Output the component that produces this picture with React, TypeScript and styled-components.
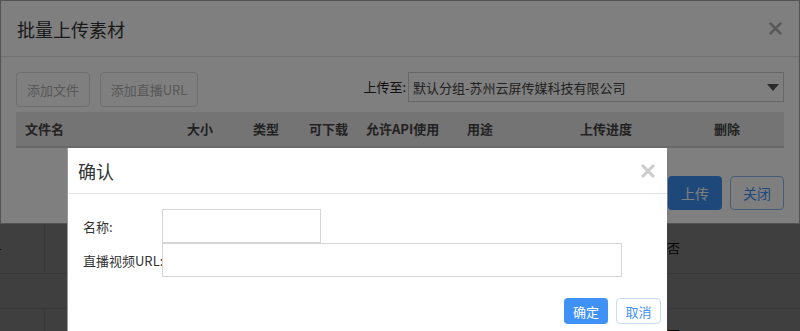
import styled, { createGlobalStyle } from "styled-components";

const GlobalStyle = createGlobalStyle`
  html, body {
    margin: 0;
    padding: 0;
    width: 800px;
    height: 331px;
    overflow: hidden;
    background: #fff;
    font-family: "Liberation Sans", "Noto Sans CJK SC", sans-serif;
    color: #333;
  }
  * { box-sizing: border-box; }
`;

const columns = [
  { label: "文件名", x: 25 },
  { label: "大小", x: 187 },
  { label: "类型", x: 253 },
  { label: "可下载", x: 309 },
  { label: "允许API使用", x: 366 },
  { label: "用途", x: 467 },
  { label: "上传进度", x: 580 },
  { label: "删除", x: 714 },
];

const CloseIcon = ({ size, color }: { size: number; color: string }) => (
  <svg width={size} height={size} viewBox="0 0 16 16">
    <path d="M2 2 L14 14 M14 2 L2 14" stroke={color} strokeWidth="3" />
  </svg>
);

const App = () => {
  return (
    <>
      <GlobalStyle />
      <Page>
        <PageRow $height={51}>
          <PageCell $width={45}>
            <Dash>-</Dash>
          </PageCell>
          <PageCell $width={620} />
          <PageCell $grow>否</PageCell>
        </PageRow>
        <PageRow $height={34}>
          <PageCell $grow />
        </PageRow>
        <PageRow $height={51}>
          <PageCell $width={45} />
          <PageCell $width={620} />
          <PageCell $grow>否</PageCell>
        </PageRow>
      </Page>

      <Mask />

      <UploadModal>
        <ModalHeader>
          <ModalTitle>批量上传素材</ModalTitle>
          <CloseIcon size={15} color="#b3b3b3" />
        </ModalHeader>
        <UploadBody>
          <Toolbar>
            <GhostButton $width={74}>添加文件</GhostButton>
            <GhostButton $width={98}>添加直播URL</GhostButton>
            <TargetLabel>上传至:</TargetLabel>
            <SelectBox>
              <span>默认分组-苏州云屏传媒科技有限公司</span>
              <Caret />
            </SelectBox>
          </Toolbar>
          <TableHead>
            {columns.map((c) => (
              <HeadCell key={c.label} style={{ left: c.x - 16 }}>
                {c.label}
              </HeadCell>
            ))}
          </TableHead>
        </UploadBody>
        <UploadFooter>
          <PrimaryButton $width={54} $height={34} $size={14}>
            上传
          </PrimaryButton>
          <OutlineButton $width={54} $height={34} $size={14} $border="#8fb9ef">
            关闭
          </OutlineButton>
        </UploadFooter>
      </UploadModal>

      <Mask />

      <ConfirmDialog>
        <DialogHeader>
          <ModalTitle>确认</ModalTitle>
          <CloseIcon size={16} color="#cccccc" />
        </DialogHeader>
        <DialogBody>
          <FormRow>
            <FieldLabel>名称:</FieldLabel>
            <TextInput $width={159} />
          </FormRow>
          <FormRow>
            <FieldLabel>直播视频URL:</FieldLabel>
            <TextInput $width={460} />
          </FormRow>
        </DialogBody>
        <DialogFooter>
          <PrimaryButton $width={44} $height={26} $size={13}>
            确定
          </PrimaryButton>
          <OutlineButton $width={45} $height={26} $size={13} $border="#c6dcfb">
            取消
          </OutlineButton>
        </DialogFooter>
      </ConfirmDialog>
    </>
  );
};

export default App;

const Page = styled.div`
  display: flex;
  flex-direction: column;
  padding-top: 222px;
  width: 800px;
  height: 331px;
  background: #fff;
`;

const PageRow = styled.div<{ $height: number }>`
  display: flex;
  flex: none;
  height: ${(p) => p.$height + 1}px;
  border-bottom: 1px solid #e3e3e3;
`;

const PageCell = styled.div<{ $width?: number; $grow?: boolean }>`
  display: flex;
  align-items: center;
  width: ${(p) => (p.$width ? `${p.$width}px` : "auto")};
  flex: ${(p) => (p.$grow ? 1 : "none")};
  border-right: 1px solid #e3e3e3;
  padding-left: ${(p) => (p.$grow ? "2px" : "0")};
  font-family: "Noto Sans CJK SC", sans-serif;
  font-size: 13px;
  color: #222;
  &:last-child {
    border-right: none;
  }
`;

const Dash = styled.span`
  margin-left: -3px;
  font-size: 13px;
`;

const Mask = styled.div`
  position: fixed;
  inset: 0;
  background: rgba(0, 0, 0, 0.5);
`;

const UploadModal = styled.div`
  position: fixed;
  top: 0;
  left: 0;
  width: 800px;
  height: 224px;
  display: flex;
  flex-direction: column;
  background: #fff;
  border: 1px solid rgba(0, 0, 0, 0.35);
`;

const ModalHeader = styled.div`
  display: flex;
  align-items: center;
  justify-content: space-between;
  height: 56px;
  padding: 0 16px 0 16px;
  border-bottom: 1px solid #e2e2e2;
`;

const ModalTitle = styled.div`
  font-family: "Noto Sans CJK SC", sans-serif;
  font-size: 18px;
  line-height: 24px;
  color: #333;
`;

const UploadBody = styled.div`
  display: flex;
  flex-direction: column;
  gap: 5px;
  padding: 15px 15px 0 15px;
`;

const Toolbar = styled.div`
  display: flex;
  align-items: flex-start;
  gap: 10px;
  height: 35px;
`;

const GhostButton = styled.div<{ $width: number }>`
  display: flex;
  align-items: center;
  justify-content: center;
  width: ${(p) => p.$width}px;
  height: 35px;
  border: 1px solid #dcdcdc;
  border-radius: 4px;
  font-family: "Noto Sans CJK SC", sans-serif;
  font-size: 13px;
  color: #b0b0b0;
`;

const TargetLabel = styled.div`
  margin-left: auto;
  height: 29px;
  display: flex;
  align-items: center;
  font-family: "Noto Sans CJK SC", sans-serif;
  font-size: 13px;
  color: #222;
  margin-right: -8px;
`;

const SelectBox = styled.div`
  display: flex;
  align-items: center;
  justify-content: space-between;
  width: 376px;
  height: 30px;
  padding: 0 4px 0 4px;
  border: 1px solid #cfcfcf;
  font-family: "Noto Sans CJK SC", sans-serif;
  font-size: 13px;
  color: #444;
`;

const Caret = styled.span`
  width: 0;
  height: 0;
  border-left: 6px solid transparent;
  border-right: 6px solid transparent;
  border-top: 7px solid #555;
`;

const TableHead = styled.div`
  position: relative;
  height: 36px;
  width: 768px;
  background: #e9e9e9;
  border-bottom: 2px solid #d2d2d2;
`;

const HeadCell = styled.span`
  position: absolute;
  top: 0;
  line-height: 34px;
  font-family: "Noto Sans CJK SC", sans-serif;
  font-size: 13px;
  font-weight: bold;
  color: #444;
`;

const UploadFooter = styled.div`
  display: flex;
  justify-content: flex-end;
  gap: 8px;
  margin-top: auto;
  padding: 0 15px 13px 0;
`;

const PrimaryButton = styled.div<{ $width: number; $height: number; $size: number }>`
  display: flex;
  align-items: center;
  justify-content: center;
  width: ${(p) => p.$width}px;
  height: ${(p) => p.$height}px;
  background: #3f91f5;
  border-radius: 4px;
  font-family: "Noto Sans CJK SC", sans-serif;
  font-size: ${(p) => p.$size}px;
  color: #fff;
`;

const OutlineButton = styled.div<{
  $width: number;
  $height: number;
  $size: number;
  $border: string;
}>`
  display: flex;
  align-items: center;
  justify-content: center;
  width: ${(p) => p.$width}px;
  height: ${(p) => p.$height}px;
  background: #fff;
  border: 1px solid ${(p) => p.$border};
  border-radius: 4px;
  font-family: "Noto Sans CJK SC", sans-serif;
  font-size: ${(p) => p.$size}px;
  color: #3f91f5;
`;

const ConfirmDialog = styled.div`
  position: fixed;
  top: 148px;
  left: 67px;
  width: 600px;
  height: 200px;
  display: flex;
  flex-direction: column;
  background: #fff;
  border-left: 1px solid #999;
`;

const DialogHeader = styled.div`
  display: flex;
  align-items: center;
  justify-content: space-between;
  height: 46px;
  padding: 0 11px 0 10px;
  border-bottom: 1px solid #e3e3e3;
`;

const DialogBody = styled.div`
  display: flex;
  flex-direction: column;
  padding: 15px 0 0 15px;
`;

const FormRow = styled.div`
  display: flex;
  align-items: center;
`;

const FieldLabel = styled.div`
  width: 79px;
  font-family: "Noto Sans CJK SC", sans-serif;
  font-size: 13px;
  color: #333;
  white-space: nowrap;
`;

const TextInput = styled.div<{ $width: number }>`
  width: ${(p) => p.$width}px;
  height: 34px;
  border: 1px solid #d5d5d5;
  background: #fff;
`;

const DialogFooter = styled.div`
  display: flex;
  justify-content: flex-end;
  gap: 8px;
  padding: 21px 6px 0 0;
`;
